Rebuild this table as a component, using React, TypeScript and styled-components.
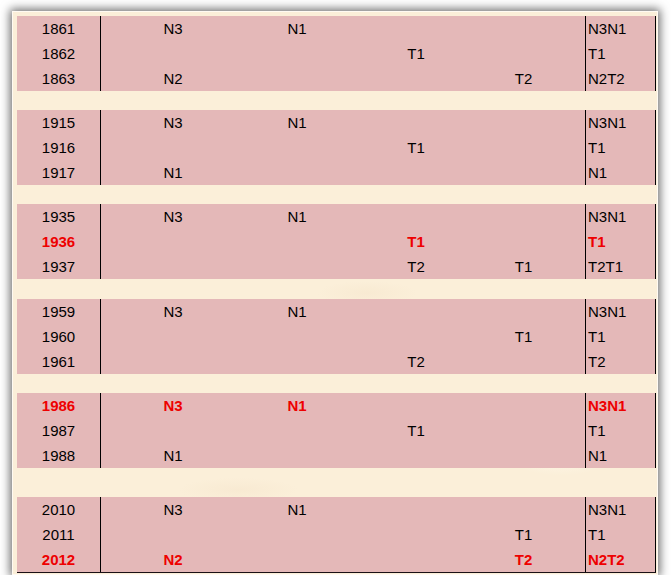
import React from "react";
import styled, { createGlobalStyle } from "styled-components";

const GlobalStyle = createGlobalStyle`
  html, body {
    margin: 0;
    padding: 0;
    background: #ffffff;
  }
  body {
    font-family: "Liberation Sans", Arial, sans-serif;
  }
`;

const Frame = styled.div`
  box-sizing: border-box;
  margin: 11px 0 0 12px;
  width: 646px;
  height: 564px;
  border: 1px solid #fffaf2;
  padding: 4px 1px 1px 4px;
  background-color: #fbefd9;
  background-image:
    radial-gradient(ellipse 40px 14px at 15% 20%, rgba(255, 249, 236, 0.5), transparent),
    radial-gradient(ellipse 50px 12px at 55% 50%, rgba(244, 228, 202, 0.45), transparent),
    radial-gradient(ellipse 45px 14px at 85% 80%, rgba(255, 249, 236, 0.5), transparent),
    radial-gradient(ellipse 60px 12px at 35% 85%, rgba(244, 228, 202, 0.45), transparent);
  box-shadow: 0 0 9px 2px rgba(0, 0, 0, 0.58);
`;

const Table = styled.div`
  width: 639px;
  display: flex;
  flex-direction: column;
`;

const Group = styled.div<{ $last?: boolean }>`
  background: #e4b8b8;
  border-bottom: ${(p) => (p.$last ? "1px solid #1a1016" : "none")};
`;

const Separator = styled.div<{ $h: number }>`
  height: ${(p) => p.$h}px;
`;

const Row = styled.div<{ $hot?: boolean }>`
  display: grid;
  grid-template-columns: 84px 144px 104px 134px 81px 21px 71px;
  height: 25px;
  font-size: 15px;
  line-height: 25px;
  color: ${(p) => (p.$hot ? "#ee0000" : "#000000")};
  font-weight: ${(p) => (p.$hot ? 700 : 400)};
`;

const YearCell = styled.div`
  box-sizing: border-box;
  border-right: 1px solid #000;
  text-align: center;
`;

const MarkCell = styled.div`
  text-align: center;
  white-space: nowrap;
`;

const SumCell = styled.div`
  box-sizing: border-box;
  border-left: 1px solid #000;
  border-right: 1px solid #000;
  padding-left: 2px;
  white-space: nowrap;
`;

type RowData = {
  year: string;
  marks: [string, string, string, string];
  sum: string;
  hot?: boolean;
};

const groups: { gap: number; rows: RowData[] }[] = [
  {
    gap: 0,
    rows: [
      { year: "1861", marks: ["N3", "N1", "", ""], sum: "N3N1" },
      { year: "1862", marks: ["", "", "T1", ""], sum: "T1" },
      { year: "1863", marks: ["N2", "", "", "T2"], sum: "N2T2" },
    ],
  },
  {
    gap: 19,
    rows: [
      { year: "1915", marks: ["N3", "N1", "", ""], sum: "N3N1" },
      { year: "1916", marks: ["", "", "T1", ""], sum: "T1" },
      { year: "1917", marks: ["N1", "", "", ""], sum: "N1" },
    ],
  },
  {
    gap: 19,
    rows: [
      { year: "1935", marks: ["N3", "N1", "", ""], sum: "N3N1" },
      { year: "1936", marks: ["", "", "T1", ""], sum: "T1", hot: true },
      { year: "1937", marks: ["", "", "T2", "T1"], sum: "T2T1" },
    ],
  },
  {
    gap: 20,
    rows: [
      { year: "1959", marks: ["N3", "N1", "", ""], sum: "N3N1" },
      { year: "1960", marks: ["", "", "", "T1"], sum: "T1" },
      { year: "1961", marks: ["", "", "T2", ""], sum: "T2" },
    ],
  },
  {
    gap: 19,
    rows: [
      { year: "1986", marks: ["N3", "N1", "", ""], sum: "N3N1", hot: true },
      { year: "1987", marks: ["", "", "T1", ""], sum: "T1" },
      { year: "1988", marks: ["N1", "", "", ""], sum: "N1" },
    ],
  },
  {
    gap: 29,
    rows: [
      { year: "2010", marks: ["N3", "N1", "", ""], sum: "N3N1" },
      { year: "2011", marks: ["", "", "", "T1"], sum: "T1" },
      { year: "2012", marks: ["N2", "", "", "T2"], sum: "N2T2", hot: true },
    ],
  },
];

export default function App() {
  return (
    <>
      <GlobalStyle />
      <Frame>
        <Table>
          {groups.map((g, gi) => (
            <React.Fragment key={gi}>
              {g.gap > 0 && <Separator $h={g.gap} />}
              <Group $last={gi === groups.length - 1}>
                {g.rows.map((r) => (
                  <Row key={r.year} $hot={r.hot}>
                    <YearCell>{r.year}</YearCell>
                    {r.marks.map((m, mi) => (
                      <MarkCell key={mi}>{m}</MarkCell>
                    ))}
                    <MarkCell />
                    <SumCell>{r.sum}</SumCell>
                  </Row>
                ))}
              </Group>
            </React.Fragment>
          ))}
        </Table>
      </Frame>
    </>
  );
}
